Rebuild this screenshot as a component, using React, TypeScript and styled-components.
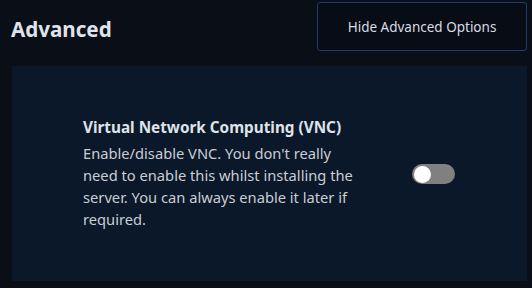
import React, { useState } from "react";
import styled, { createGlobalStyle } from "styled-components";

const GlobalStyle = createGlobalStyle`
  html, body {
    margin: 0;
    padding: 0;
    background: #090e17;
  }
  body {
    font-family: "Noto Sans", "Open Sans", sans-serif;
    color: #dfe3ea;
  }
  * {
    box-sizing: border-box;
  }
`;

export default function App() {
  const [vnc, setVnc] = useState(false);
  return (
    <>
      <GlobalStyle />
      <Page>
        <Header>
          <Title>Advanced</Title>
          <HeaderButton>Hide Advanced Options</HeaderButton>
        </Header>
        <Card>
          <SettingText>
            <SettingTitle>Virtual Network Computing (VNC)</SettingTitle>
            <SettingDesc>
              Enable/disable VNC. You don't really need to enable this whilst
              installing the server. You can always enable it later if required.
            </SettingDesc>
          </SettingText>
          <Toggle $on={vnc} onClick={() => setVnc(!vnc)}>
            <Knob $on={vnc} />
          </Toggle>
        </Card>
      </Page>
    </>
  );
}

const Page = styled.div`
  width: 532px;
  height: 288px;
  padding: 2px 5px 0 12px;
  display: flex;
  flex-direction: column;
  gap: 15px;
`;

const Header = styled.div`
  display: flex;
  align-items: center;
  justify-content: space-between;
  height: 49px;
`;

const Title = styled.h2`
  margin: 4px 0 0 -1px;
  font-size: 20.6px;
  font-weight: 700;
  color: #dfe3ea;
`;

const HeaderButton = styled.button`
  width: 210px;
  height: 49px;
  border: 1px solid #1f3c70;
  border-radius: 3px;
  background: #070c15;
  color: #d8dce3;
  font-family: "Noto Sans", "Open Sans", sans-serif;
  font-size: 13.5px;
  cursor: pointer;
`;

const Card = styled.div`
  width: 515px;
  height: 215px;
  background: #0b1829;
  display: flex;
  align-items: center;
  justify-content: space-between;
  padding: 0 72px 0 71px;
`;

const SettingText = styled.div`
  width: 270px;
  display: flex;
  flex-direction: column;
  gap: 5px;
`;

const SettingTitle = styled.div`
  font-size: 15.3px;
  font-weight: 700;
  color: #dfe3ea;
`;

const SettingDesc = styled.div`
  font-size: 14.7px;
  line-height: 22px;
  color: #c9cdd4;
`;

const Toggle = styled.button<{ $on: boolean }>`
  position: relative;
  width: 43px;
  height: 20px;
  border: none;
  padding: 0;
  border-radius: 10px;
  background: ${(p) => (p.$on ? "#2f6fe0" : "#808080")};
  cursor: pointer;
  margin-top: 1px;
`;

const Knob = styled.span<{ $on: boolean }>`
  position: absolute;
  top: 1.5px;
  left: ${(p) => (p.$on ? "24.5px" : "1.5px")};
  width: 17px;
  height: 17px;
  border-radius: 50%;
  background: #ffffff;
`;
